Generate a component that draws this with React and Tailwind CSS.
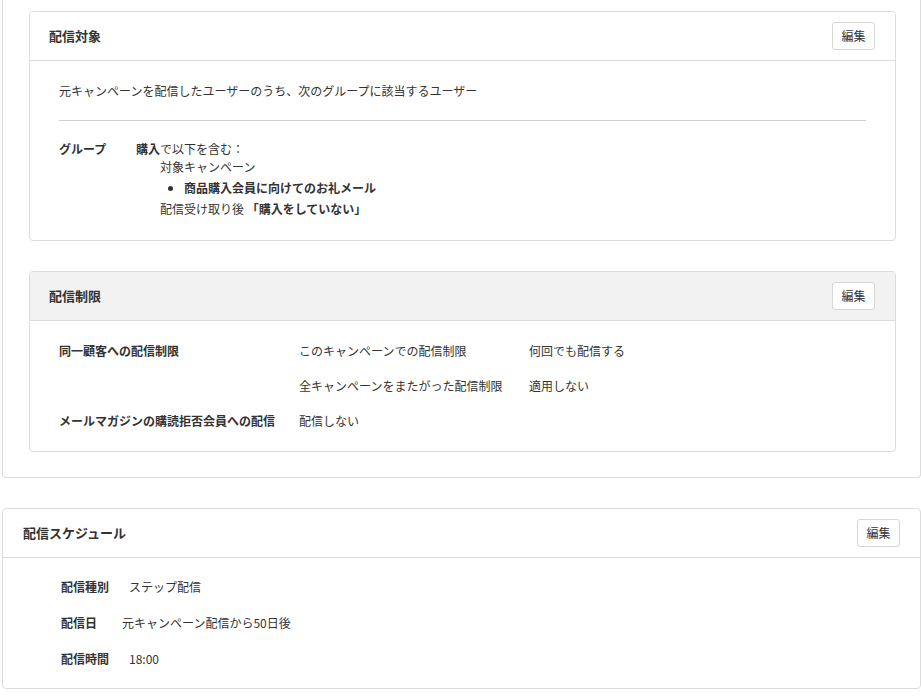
import React from "react";

const EditButton = () => (
  <button className="h-[28px] w-[43px] rounded-[3px] border border-[#d6d6d6] bg-white text-[12px] text-[#333]">
    編集
  </button>
);

const CardHeader = ({ title, gray }) => (
  <div
    className={`flex h-[49px] items-center justify-between border-b border-[#dcdcdc] pl-[19px] pr-[20px] ${
      gray ? "bg-[#f2f2f2]" : "bg-white"
    }`}
  >
    <h2 className="text-[13px] font-bold text-[#333]">{title}</h2>
    <EditButton />
  </div>
);

const App = () => {
  return (
    <div
      className="min-h-[698px] bg-white text-[12px] leading-[18px] text-[#333]"
      style={{ fontFamily: '"Noto Sans CJK JP", "Noto Sans", sans-serif' }}
    >
      <div className="ml-[2px] w-[919px]">
        {/* 配信対象 / 配信制限 */}
        <div className="rounded-b-[4px] border border-t-0 border-[#dcdcdc] pb-[25px] pl-[26px] pr-[24px] pt-[11px]">
          <div className="overflow-hidden rounded-[4px] border border-[#dcdcdc]">
            <CardHeader title="配信対象" />
            <div className="px-[29px] pb-[22px] pt-[21px]">
              <p>元キャンペーンを配信したユーザーのうち、次のグループに該当するユーザー</p>
              <hr className="mt-[20px] border-[#cfcfcf]" />
              <div className="mt-[19px] flex">
                <div className="w-[77px] font-bold">グループ</div>
                <div>
                  <div>
                    <span className="font-bold">購入</span>で以下を含む：
                  </div>
                  <div className="pl-[24px]">
                    <div>対象キャンペーン</div>
                    <ul className="mt-[3px] list-disc pl-[24px]">
                      <li className="font-bold">商品購入会員に向けてのお礼メール</li>
                    </ul>
                    <div className="mt-[3px]">
                      配信受け取り後 <span className="font-bold">「購入をしていない」</span>
                    </div>
                  </div>
                </div>
              </div>
            </div>
          </div>

          <div className="mt-[30px] overflow-hidden rounded-[4px] border border-[#dcdcdc]">
            <CardHeader title="配信制限" gray />
            <div className="px-[29px] pb-[21px] pt-[21px]">
              <div className="grid grid-cols-[240px_230px_1fr] gap-y-[17px]">
                <div className="font-bold">同一顧客への配信制限</div>
                <div>このキャンペーンでの配信制限</div>
                <div>何回でも配信する</div>
                <div />
                <div>全キャンペーンをまたがった配信制限</div>
                <div>適用しない</div>
                <div className="font-bold">メールマガジンの購読拒否会員への配信</div>
                <div>配信しない</div>
                <div />
              </div>
            </div>
          </div>
        </div>

        {/* 配信スケジュール */}
        <div className="mt-[30px] overflow-hidden rounded-[4px] border border-[#dcdcdc]">
          <div className="flex h-[49px] items-center justify-between border-b border-[#dcdcdc] pl-[20px] pr-[20px]">
            <h2 className="text-[13px] font-bold">配信スケジュール</h2>
            <EditButton />
          </div>
          <div className="flex flex-col gap-[18px] pb-[20px] pl-[58px] pt-[20px]">
            <div className="flex">
              <span className="font-bold">配信種別</span>
              <span className="ml-[20px]">ステップ配信</span>
            </div>
            <div className="flex">
              <span className="font-bold">配信日</span>
              <span className="ml-[25px]">元キャンペーン配信から50日後</span>
            </div>
            <div className="flex">
              <span className="font-bold">配信時間</span>
              <span className="ml-[20px]">18:00</span>
            </div>
          </div>
        </div>
      </div>
    </div>
  );
};

export default App;
